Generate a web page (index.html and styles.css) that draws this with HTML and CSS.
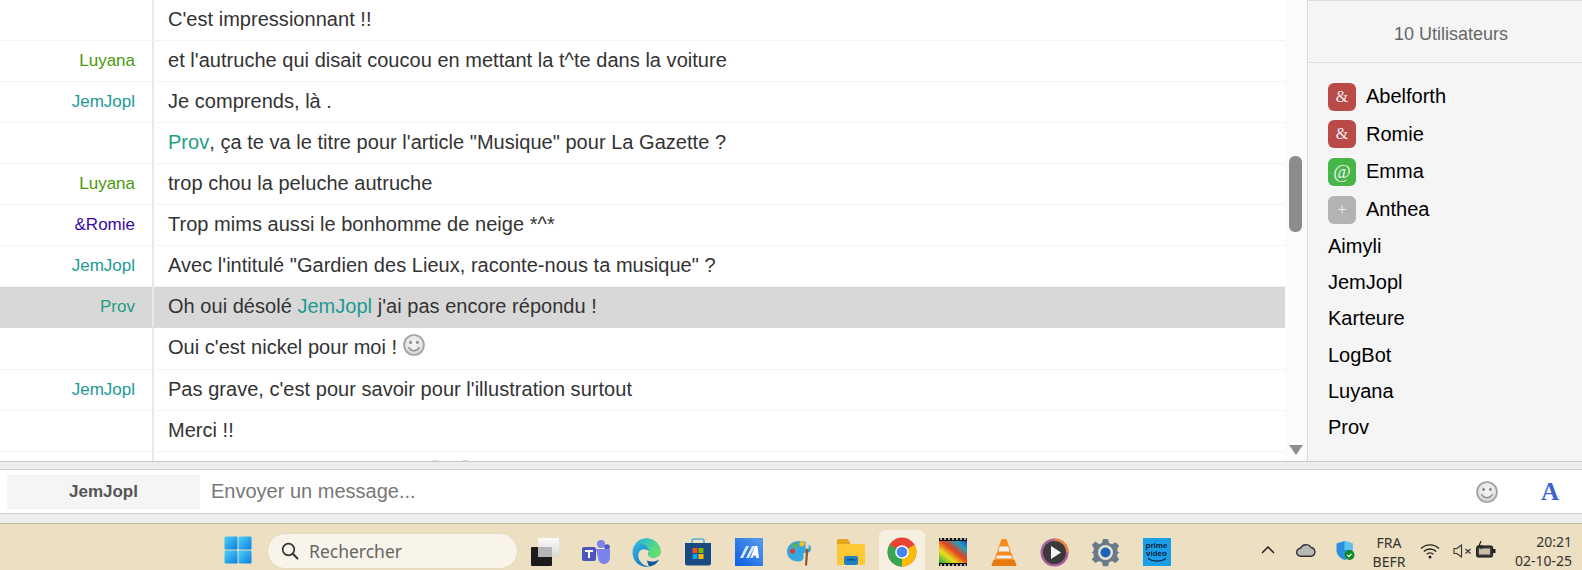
FILE: index.html
```html
<!DOCTYPE html>
<html lang="fr">
<head>
<meta charset="utf-8">
<title>Chat</title>
<link rel="stylesheet" href="styles.css">
</head>
<body>
<svg class="defs" width="0" height="0">
  <defs>
    <radialGradient id="smile-bg" cx="50%" cy="45%" r="55%"><stop offset="0" stop-color="#f6f6f6"/><stop offset="0.7" stop-color="#e6e6e6"/><stop offset="1" stop-color="#c4c4c4"/></radialGradient>
    <symbol id="smiley" viewBox="0 0 22 22">
      <circle cx="11" cy="11" r="10" fill="url(#smile-bg)" stroke="#a0a0a0" stroke-width="1.6"/>
      <ellipse cx="7.6" cy="8.4" rx="1.4" ry="1.7" fill="#8a8a8a"/>
      <ellipse cx="14.4" cy="8.4" rx="1.4" ry="1.7" fill="#8a8a8a"/>
      <path d="M5.5 13.2c1.400 2.600 3.400 3.600 5.500 3.600s4.100-1 5.500-3.600" fill="none" stroke="#8a8a8a" stroke-width="1.4"/>
    </symbol>
  </defs>
</svg>
<div class="app">
  <div class="chat">
    <div class="messages">
      <div class="row first"><div class="nick"></div><div class="text">C'est impressionnant !!</div></div>
      <div class="row"><div class="nick c-luyana">Luyana</div><div class="text">et l'autruche qui disait coucou en mettant la t^te dans la voiture</div></div>
      <div class="row"><div class="nick c-jem">JemJopl</div><div class="text">Je comprends, là .</div></div>
      <div class="row"><div class="nick"></div><div class="text"><span class="c-prov">Prov</span>, ça te va le titre pour l'article "Musique" pour La Gazette ?</div></div>
      <div class="row"><div class="nick c-luyana">Luyana</div><div class="text">trop chou la peluche autruche</div></div>
      <div class="row"><div class="nick c-romie">&amp;Romie</div><div class="text">Trop mims aussi le bonhomme de neige *^*</div></div>
      <div class="row"><div class="nick c-jem">JemJopl</div><div class="text">Avec l'intitulé "Gardien des Lieux, raconte-nous ta musique" ?</div></div>
      <div class="row hl"><div class="nick c-prov">Prov</div><div class="text">Oh oui désolé <span class="c-jem">JemJopl</span> j'ai pas encore répondu !</div></div>
      <div class="row tall"><div class="nick"></div><div class="text">Oui c'est nickel pour moi ! <svg class="emoji"><use href="#smiley"/></svg></div></div>
      <div class="row"><div class="nick c-jem">JemJopl</div><div class="text">Pas grave, c'est pour savoir pour l'illustration surtout</div></div>
      <div class="row"><div class="nick"></div><div class="text">Merci !!</div></div>
      <div class="row last"><div class="nick"></div><div class="text clipped"><svg class="emoji"><use href="#smiley"/></svg><svg class="emoji"><use href="#smiley"/></svg></div></div>
    </div>
    <div class="scrollbar">
      <div class="thumb"></div>
      <svg class="arrow" width="14" height="10" viewBox="0 0 14 10"><path d="M0 0h14L7 10z" fill="#8d8d8d"/></svg>
    </div>
    <aside class="users">
      <div class="users-head">10 Utilisateurs</div>
      <ul class="user-list">
        <li class="u badge-row"><span class="badge red">&amp;</span>Abelforth</li>
        <li class="u badge-row"><span class="badge red">&amp;</span>Romie</li>
        <li class="u badge-row"><span class="badge green">@</span>Emma</li>
        <li class="u badge-row"><span class="badge grey">+</span>Anthea</li>
        <li class="u">Aimyli</li>
        <li class="u">JemJopl</li>
        <li class="u">Karteure</li>
        <li class="u">LogBot</li>
        <li class="u">Luyana</li>
        <li class="u">Prov</li>
      </ul>
    </aside>
  </div>
  <div class="composer">
    <div class="input-box">
      <div class="me">JemJopl</div>
      <div class="placeholder">Envoyer un message...</div>
      <svg class="input-smile"><use href="#smiley"/></svg>
      <div class="font-a">A</div>
    </div>
  </div>
  <div class="taskbar">
    <svg class="winlogo" width="28" height="28" viewBox="0 0 28 28">
      <defs><linearGradient id="w1" x1="0" y1="0" x2="1" y2="1"><stop offset="0" stop-color="#4fd0f8"/><stop offset="1" stop-color="#0a7fdc"/></linearGradient></defs>
      <rect x="0.5" y="0.5" width="13" height="13" rx="1" fill="url(#w1)"/><rect x="14.5" y="0.5" width="13" height="13" rx="1" fill="url(#w1)"/><rect x="0.5" y="14.5" width="13" height="13" rx="1" fill="url(#w1)"/><rect x="14.5" y="14.5" width="13" height="13" rx="1" fill="url(#w1)"/>
    </svg>
    <div class="search">
      <svg width="18" height="18" viewBox="0 0 18 18"><circle cx="7.5" cy="7.5" r="5.8" fill="none" stroke="#333" stroke-width="1.7"/><path d="M12 12l4.5 4.5" stroke="#333" stroke-width="1.9" stroke-linecap="round"/></svg>
      <span>Rechercher</span>
    </div>
    <div class="apps">
      <div class="app-i"><svg width="28" height="28" viewBox="0 0 28 28"><defs><linearGradient id="tv1" x1="0" y1="0" x2="0" y2="1"><stop offset="0" stop-color="#fafafa"/><stop offset="1" stop-color="#d8d8d8"/></linearGradient></defs><rect x="7" y="0" width="21" height="19" rx="1" fill="url(#tv1)"/><rect x="0" y="9" width="21" height="19" rx="1" fill="#1c1c1c"/><rect x="7" y="9" width="14" height="10" fill="#b5b5b5"/></svg></div>
      <div class="app-i"><svg width="28" height="26" viewBox="0 0 28 26"><circle cx="19" cy="5" r="4" fill="#7b83eb"/><circle cx="25" cy="8" r="2.8" fill="#5059c9"/><path d="M14 10h13a1 1 0 0 1 1 1v8a6 6 0 0 1-12 0z" fill="#7b83eb"/><rect x="0" y="8" width="14" height="14" rx="2" fill="#4b53bc"/><path d="M3 11h8v2H8v6H6v-6H3z" fill="#fff"/></svg></div>
      <div class="app-i"><svg width="29" height="29" viewBox="0 0 29 29"><defs><linearGradient id="e1" x1="0" y1="0" x2="1" y2="1"><stop offset="0" stop-color="#35c1f1"/><stop offset="1" stop-color="#0c59a4"/></linearGradient><linearGradient id="e2" x1="0" y1="0" x2="1" y2="0.6"><stop offset="0" stop-color="#1bb4e4"/><stop offset="1" stop-color="#66e26a"/></linearGradient></defs><path d="M14.500 0.500C22 0.500 28.500 6 28.500 14c0 1-.2 2-.6 2.800-2 3-7.500 3.700-10.400 1.600-1.800-1.400-1.800-3.500-.4-5-2-2.500-6-3-8.800-1C6 14.500 5.500 19 8 23c1.800 3 5 5 9 5.400C8 30.500 0.500 23 0.500 14.500 0.500 6.700 6.700 0.500 14.500 0.500z" fill="url(#e1)"/><path d="M3 7C6 2.500 10 .5 14.500.5 22 .5 28.500 6 28.500 14c0 1-.2 2-.6 2.800-2 3-7.500 3.700-10.400 1.600-1.800-1.400-1.800-3.500-.4-5C15.500 7 8 3 3 7z" fill="url(#e2)"/><path d="M17 28.400c4.500-.3 8-2.800 10-7-2.500 2-8 3.300-12 .8 0 0 1 4 2 6.200z" fill="#0c59a4"/></svg></div>
      <div class="app-i"><svg width="28" height="28" viewBox="0 0 28 28"><path d="M8 5V3a2 2 0 0 1 2-2h8a2 2 0 0 1 2 2v2" fill="none" stroke="#4fb0d8" stroke-width="1.6"/><path d="M1 5h26v20a2.500 2.500 0 0 1-2.500 2.500h-21A2.500 2.500 0 0 1 1 25z" fill="#1a4a82"/><rect x="8.500" y="10" width="5" height="5" fill="#f25022"/><rect x="14.500" y="10" width="5" height="5" fill="#7fba00"/><rect x="8.500" y="16" width="5" height="5" fill="#00a4ef"/><rect x="14.500" y="16" width="5" height="5" fill="#ffb900"/></svg></div>
      <div class="app-i"><svg width="28" height="28" viewBox="0 0 28 28"><defs><linearGradient id="m1" x1="0" y1="1" x2="1" y2="0"><stop offset="0" stop-color="#0a5fe0"/><stop offset="1" stop-color="#5a9cf0"/></linearGradient></defs><rect width="28" height="28" fill="url(#m1)"/><path d="M5 20l6-12h3l-6 12zM11 20l6-12h3l-6 12z" fill="#dce9fb"/><path d="M20 8h2.500l1.500 12h-3l-.3-2.500h-2l-1.200 2.500h-2z" fill="#fff"/></svg></div>
      <div class="app-i"><svg width="27" height="27" viewBox="0 0 27 27"><path d="M13 2c7 0 12 3.500 12 8 0 3-2.500 3.500-5 3.500-2 0-3 1-2.500 3 .6 2.500-.5 6-5 6C6 22.500 1 18.500 1 12.500 1 6.500 6.500 2 13 2z" fill="#35a6de"/><circle cx="6.500" cy="12" r="2.600" fill="#d9402e"/><circle cx="9" cy="6.500" r="2.600" fill="#62b246"/><circle cx="16" cy="4.800" r="2.600" fill="#f4c01e"/><path d="M20 9l2.500.5-1.500 17h-2z" fill="#8a5a24"/><path d="M19.500 3.500h3.500l-.5 6.500-3-.5z" fill="#e8dcc0"/></svg></div>
      <div class="app-i"><svg width="28" height="26" viewBox="0 0 28 26"><path d="M0 2a2 2 0 0 1 2-2h8l3 3h0v4H0z" fill="#e3a51a"/><path d="M0 5h26a2 2 0 0 1 2 2v17a2 2 0 0 1-2 2H2a2 2 0 0 1-2-2z" fill="#fcc935"/><rect x="7" y="17" width="14" height="9" rx="2" fill="#1f7fc4"/><rect x="10" y="20" width="8" height="1.500" fill="#0f4e80"/></svg></div>
      <div class="app-i active"><svg width="30" height="30" viewBox="0 0 30 30"><circle cx="15" cy="15" r="14.500" fill="#ea4335"/><path d="M15 15L27.500 7.800A14.500 14.500 0 0 1 15 29.500z" fill="#fbbc05"/><path d="M15 15L15 29.500A14.500 14.500 0 0 1 2.500 7.800z" fill="#34a853"/><circle cx="15" cy="15" r="6.800" fill="#fff"/><circle cx="15" cy="15" r="5.300" fill="#4285f4"/></svg></div>
      <div class="app-i"><svg width="28" height="28" viewBox="0 0 28 28"><defs><linearGradient id="p1" x1="0" y1="1" x2="1" y2="0"><stop offset="0" stop-color="#1fa83c"/><stop offset="0.3" stop-color="#e8e020"/><stop offset="0.55" stop-color="#e8401c"/><stop offset="0.8" stop-color="#22a0c0"/><stop offset="1" stop-color="#1e40c0"/></linearGradient></defs><rect width="28" height="28" fill="#111"/><rect x="0" y="3" width="28" height="22" fill="url(#p1)"/><path d="M1 1h2M5 1h2M9 1h2M13 1h2M17 1h2M21 1h2M25 1h2M1 27h2M5 27h2M9 27h2M13 27h2M17 27h2M21 27h2M25 27h2" stroke="#ddd" stroke-width="1.300"/></svg></div>
      <div class="app-i"><svg width="26" height="28" viewBox="0 0 26 28"><path d="M10.500 1h5L23 23H3z" fill="#f58a1e"/><path d="M8.700 8.500h8.600l1.400 5H7.300zM6 17.500h14l1 3H5z" fill="#f0f0f0"/><path d="M2.500 22h21l2 5a1 1 0 0 1-1 1H1.500a1 1 0 0 1-1-1z" fill="#e87a10"/></svg></div>
      <div class="app-i"><svg width="29" height="29" viewBox="0 0 29 29"><circle cx="14.500" cy="14.500" r="14" fill="#a45f9c"/><path d="M14.500.5a14 14 0 0 1 14 14h-3a11 11 0 0 0-11-11z" fill="#e8823c"/><circle cx="14.500" cy="14.500" r="11.500" fill="#3a3a3a"/><path d="M11 8l10 6.500L11 21z" fill="#f5f5f5"/></svg></div>
      <div class="app-i"><svg width="29" height="29" viewBox="0 0 29 29"><path d="M12 1h5l1 4 3 1.300 3.600-2.100 3.500 3.500-2.100 3.600L27 14l2 .5-2 .5-1 3 2.100 3.600-3.500 3.500-3.600-2.100-3 1.300-1 4h-5l-1-4-3-1.300-3.600 2.100-3.500-3.500L3 18.500 2 15l-2-.5 2-.5 1-3.500-2.100-3.600 3.500-3.500L8 6.300l3-1.300z" fill="#6b7a88"/><circle cx="14.500" cy="14.500" r="7.500" fill="#e8e2d0"/><circle cx="14.500" cy="14.500" r="5" fill="#1d63b8"/></svg></div>
      <div class="app-i"><div class="prime"><span class="prime-t">prime<br>video</span><svg width="20" height="4" viewBox="0 0 20 4"><path d="M1 .5c5 3.500 13 3.500 18 0" fill="none" stroke="#0a2540" stroke-width="1.200"/></svg></div></div>
    </div>
    <div class="tray">
      <svg class="t-caret" width="14" height="8" viewBox="0 0 14 8"><path d="M1 7l6-6 6 6" fill="none" stroke="#222" stroke-width="1.500"/></svg>
      <svg class="t-cloud" width="20" height="14" viewBox="0 0 20 14"><path d="M5 13.300a4 4 0 0 1-.6-8A6 6 0 0 1 15 4.500a4.500 4.500 0 0 1 .5 8.800z" fill="#b8b8b4" stroke="#333" stroke-width="1.400"/></svg>
      <svg class="t-shield" width="20" height="20" viewBox="0 0 20 20"><path d="M8.500 0l8 2.500V9c0 4.500-3 8-8 10C3.500 17 .5 13.500.5 9V2.500z" fill="#2a8fe0"/><path d="M8.500 0l8 2.500V9H8.500z" fill="#5cc4f0"/><circle cx="13.500" cy="14" r="5" fill="#0f8a2c"/><path d="M11.300 14l1.600 1.600 2.600-2.800" fill="none" stroke="#fff" stroke-width="1.200"/></svg>
      <div class="t-lang">FRA<br>BEFR</div>
      <svg class="t-wifi" width="20" height="16" viewBox="0 0 20 16"><path d="M1 5.500a13 13 0 0 1 18 0M3.800 8.500a9 9 0 0 1 12.400 0M6.600 11.300a5 5 0 0 1 6.800 0" fill="none" stroke="#222" stroke-width="1.300"/><circle cx="10" cy="14" r="1.500" fill="#222"/></svg>
      <svg class="t-vol" width="19" height="14" viewBox="0 0 19 14"><path d="M1 4.500h3L8.500 1v12L4 9.500H1z" fill="none" stroke="#333" stroke-width="1.100"/><path d="M12.500 5l5 4.500M17.500 5l-5 4.500" stroke="#333" stroke-width="1.100"/></svg>
      <svg class="t-bat" width="20" height="17" viewBox="0 0 20 17"><rect x="0.600" y="5" width="16" height="11" rx="1.500" fill="#3a3a3a" stroke="#111"/><rect x="3" y="7.500" width="11" height="6" fill="#c9c0a4"/><rect x="17" y="8" width="2.500" height="4" fill="#222"/><path d="M5 0L3 5h3L5 8" fill="none" stroke="#222" stroke-width="1.200"/></svg>
      <div class="t-clock">20:21<br>02-10-25</div>
    </div>
  </div>
</div>
</body>
</html>
```
FILE: styles.css
```css
* { box-sizing: border-box; }
html, body { margin: 0; padding: 0; height: 100%; overflow: hidden; }
body { font-family: "Liberation Sans", Arial, sans-serif; background: #fff; }
.defs { display: block; height: 0; }
.app { display: flex; flex-direction: column; width: 1582px; height: 570px; }

.chat { display: flex; height: 462px; border-bottom: 1px solid #c9c9c9; overflow: hidden; }
.messages { width: 1285px; display: flex; flex-direction: column; overflow: hidden; flex: none; }
.row { display: flex; flex: none; height: 41px; border-bottom: 1px solid #f3f3f3; align-items: center; }
.row.first { height: 41px; }
.row.tall { height: 42px; }
.row.hl { background: #d8d8d8; border-bottom-color: #d8d8d8; }
.row.last { border-bottom: 0; height: 20px; align-items: flex-start; }
.nick { width: 152px; flex: none; align-self: stretch; display: flex; align-items: center; justify-content: flex-end; padding-right: 17px; font-size: 17px; }
.text { flex: 1; align-self: stretch; display: flex; align-items: center; white-space: pre-wrap; border-left: 2px solid #e8e8e8; padding: 0 0 2px 14px; font-size: 20px; letter-spacing: 0.03px; color: #333; }
.text > .emoji { margin: -6px 0 0 0; }
.text.clipped { align-items: flex-start; padding: 8px 0 0 270px; }
.text.clipped > .emoji { margin: 0 8px 0 0; opacity: 0.6; }
.emoji { width: 22px; height: 22px; flex: none; }
.c-luyana { color: #4b9a0a; }
.c-jem { color: #1d9a94; }
.c-prov { color: #1f9d82; }
.c-romie { color: #3a0a9c; }

.scrollbar { width: 22px; flex: none; background: #fbfbfb; position: relative; }
.thumb { position: absolute; left: 4px; top: 156px; width: 13px; height: 76px; border-radius: 6px; background: #8c8c8c; }
.arrow { position: absolute; left: 4px; top: 445px; }

.users { flex: 1; background: #f5f5f5; border-left: 1px solid #d9d9d9; border-top: 1px solid #dcdcdc; }
.users-head { height: 62px; border-bottom: 1px solid #dcdcdc; display: flex; align-items: center; justify-content: center; font-size: 18px; color: #666; padding: 6px 0 0 12px; }
.user-list { list-style: none; margin: 0; padding: 15px 0 0 20px; color: #000; font-size: 20px; }
.u { height: 36.2px; display: flex; align-items: center; }
.badge-row { height: 37.6px; }
.badge { width: 28px; height: 28px; border-radius: 6px; margin-right: 10px; display: flex; align-items: center; justify-content: center; color: #f0f0f0; font-family: "Liberation Serif", serif; font-size: 16px; }
.red { background: #b94a48; }
.green { background: #46b648; font-size: 19px; }
.grey { background: #b3b3b3; }

.composer { height: 62px; background: #eeeeee; padding: 7px 0 11px; border-bottom: 1px solid #c4bca6; }
.input-box { height: 45px; background: #fff; border-top: 1px solid #cfcfcf; border-bottom: 1px solid #cfcfcf; display: flex; align-items: center; padding-left: 7px; }
.me { width: 193px; height: 34px; background: #f5f5f5; color: #555; font-weight: 700; font-size: 17px; display: flex; align-items: center; justify-content: center; }
.placeholder { flex: 1; padding-left: 11px; font-size: 20px; color: #777; }
.input-smile { width: 22px; height: 22px; margin-right: 39px; position: relative; left: 9px; }
.font-a { width: 54px; padding-left: 13px; font-family: "Liberation Serif", serif; font-weight: 700; font-size: 25px; color: #3a62d0; }

.taskbar { flex: 1; background: #ecdfc2; display: flex; align-items: center; position: relative; padding-left: 224px; }
.winlogo { flex: none; margin-right: 15px; margin-top: 6px; }
.search { width: 251px; height: 36px; background: #f8f4ea; border-radius: 18px; border: 1px solid #e4d9bf; display: flex; align-items: center; gap: 10px; padding-left: 13px; margin-top: 7px; color: #666; font-family: "Noto Sans", sans-serif; font-size: 17.5px; flex: none; }
.apps { display: flex; margin-left: 1px; margin-top: 6px; }
.app-i { width: 51px; height: 40px; display: flex; align-items: center; justify-content: center; flex: none; padding-top: 4px; }
.app-i.active { background: #f6f0e2; border-radius: 6px 6px 0 0; width: 46px; margin: 0 2.500px; }
.prime { width: 28px; height: 28px; background: #1a9ee8; display: flex; flex-direction: column; align-items: center; justify-content: center; }
.prime-t { font-size: 8px; line-height: 8px; font-weight: 700; color: #0a2540; text-align: center; }
.tray { position: absolute; inset: 0 auto 0 1261px; width: 321px; display: flex; align-items: center; color: #333; font-family: "Noto Sans", sans-serif; font-size: 14px; line-height: 19px; }
.t-caret { margin: 6px 0 0 0; }
.t-cloud { margin: 5px 0 0 21px; }
.t-shield { margin: 7px 0 0 20px; }
.t-lang { width: 50px; margin: 9px 0 0 8px; text-align: center; }
.t-wifi { margin: 7px 0 0 6px; }
.t-vol { margin: 7px 0 0 13px; }
.t-bat { margin: 4px 0 0 4px; }
.t-clock { margin: 8px 0 0 11px; width: 65px; text-align: right; }
```
